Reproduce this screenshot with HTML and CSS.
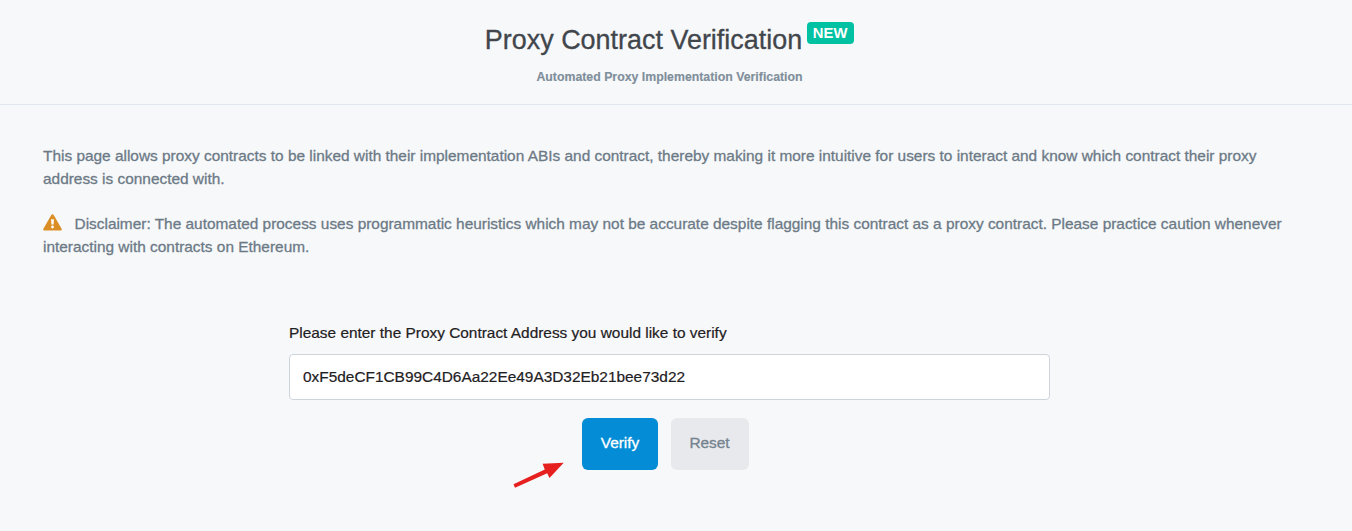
FILE: index.html
```html
<!DOCTYPE html>
<html lang="en">
<head>
<meta charset="utf-8">
<title>Proxy Contract Verification</title>
<link rel="stylesheet" href="styles.css">
</head>
<body>
<header class="head">
  <h1 class="title"><span class="title-text">Proxy Contract Verification</span><span class="badge">NEW</span></h1>
  <p class="subtitle">Automated Proxy Implementation Verification</p>
</header>
<main class="main">
  <p class="para">This page allows proxy contracts to be linked with their implementation ABIs and contract, thereby making it more intuitive for users to interact and know which contract their proxy<br>address is connected with.</p>
  <p class="para"><svg class="warn" viewBox="0 0 19 17"><path fill="#dc8e26" d="M8.300 1.100Q9.500-.6 10.700 1.100L18.600 14.700Q19.300 16.500 17.500 16.600H1.500Q-.3 16.500.4 14.700z"/><path fill="#fff" d="M8.100 5.300h2.800l-.3 5.300H8.400z"/><circle cx="9.500" cy="13" r="1.400" fill="#fff"/></svg>Disclaimer: The automated process uses programmatic heuristics which may not be accurate despite flagging this contract as a proxy contract. Please practice caution whenever<br>interacting with contracts on Ethereum.</p>
  <form class="form">
    <label class="label" for="address">Please enter the Proxy Contract Address you would like to verify</label>
    <input class="input" id="address" type="text" value="0xF5deCF1CB99C4D6Aa22Ee49A3D32Eb21bee73d22">
    <div class="actions">
      <button class="btn verify" type="button">Verify</button>
      <button class="btn reset" type="button">Reset</button>
      <svg class="arrow" viewBox="0 0 54 30"><path fill="#e5201e" d="M1.500 24.200L32.800 9.500 30.600 3.800 51.700 2.700 37.500 18 35.200 13.200 3 27.800z"/></svg>
    </div>
  </form>
</main>
</body>
</html>
```
FILE: styles.css
```css
* { box-sizing: border-box; }
body { margin: 0; background: #f7f8fa; font-family: "Liberation Sans", Arial, sans-serif; font-size: 15.41px; color: #6c7a86; height: 531px; overflow: hidden; }
.head { height: 105px; border-bottom: 1px solid #e2e6f0; padding-top: 22px; }
.title { margin: 0; display: flex; justify-content: center; align-items: flex-start; gap: 5px; width: 1339px; height: 48px; font-size: 26.95px; font-weight: 400; line-height: 36px; color: #41464c; -webkit-text-stroke: .3px; }
.badge { width: 47px; height: 22px; border-radius: 4px; background: #00c2a2; color: #fff; font-size: 14.8px; font-weight: 700; line-height: 22px; text-align: center; -webkit-text-stroke: 0; padding-right: 1px; letter-spacing: .1px; }
.subtitle { margin: 0; width: 1339px; text-align: center; font-size: 12.32px; font-weight: 700; line-height: 14px; color: #7f8e9b; -webkit-text-stroke: .15px; }
.main { padding: 39px 43px 0; }
.para { margin: 0 0 22px; line-height: 23px; white-space: nowrap; -webkit-text-stroke: .3px; }
.warn { width: 19px; height: 17px; margin-right: 12.5px; vertical-align: -2px; }
.form { width: 761px; margin: 63px 0 0 246px; }
.label { display: block; line-height: 23px; color: #1e2022; -webkit-text-stroke: .2px; }
.input { display: block; width: 761px; height: 46px; margin-top: 10px; padding: 0 13px 1px; border: 1px solid #ced4dc; border-radius: 4px; background: #fff; color: #1e2022; font: inherit; -webkit-text-stroke: .2px; }
.actions { position: relative; display: flex; gap: 13px; margin: 18px 0 0 293px; }
.btn { height: 52px; padding: 0 0 3px; border: 0; border-radius: 6px; font: inherit; -webkit-text-stroke: .3px; }
.verify { width: 76px; background: #048dd6; color: #fff; }
.reset { width: 78px; padding-right: 1px; background: #e8e9ed; color: #74828e; }
.arrow { position: absolute; left: -70px; top: 42px; width: 54px; height: 30px; }
```
